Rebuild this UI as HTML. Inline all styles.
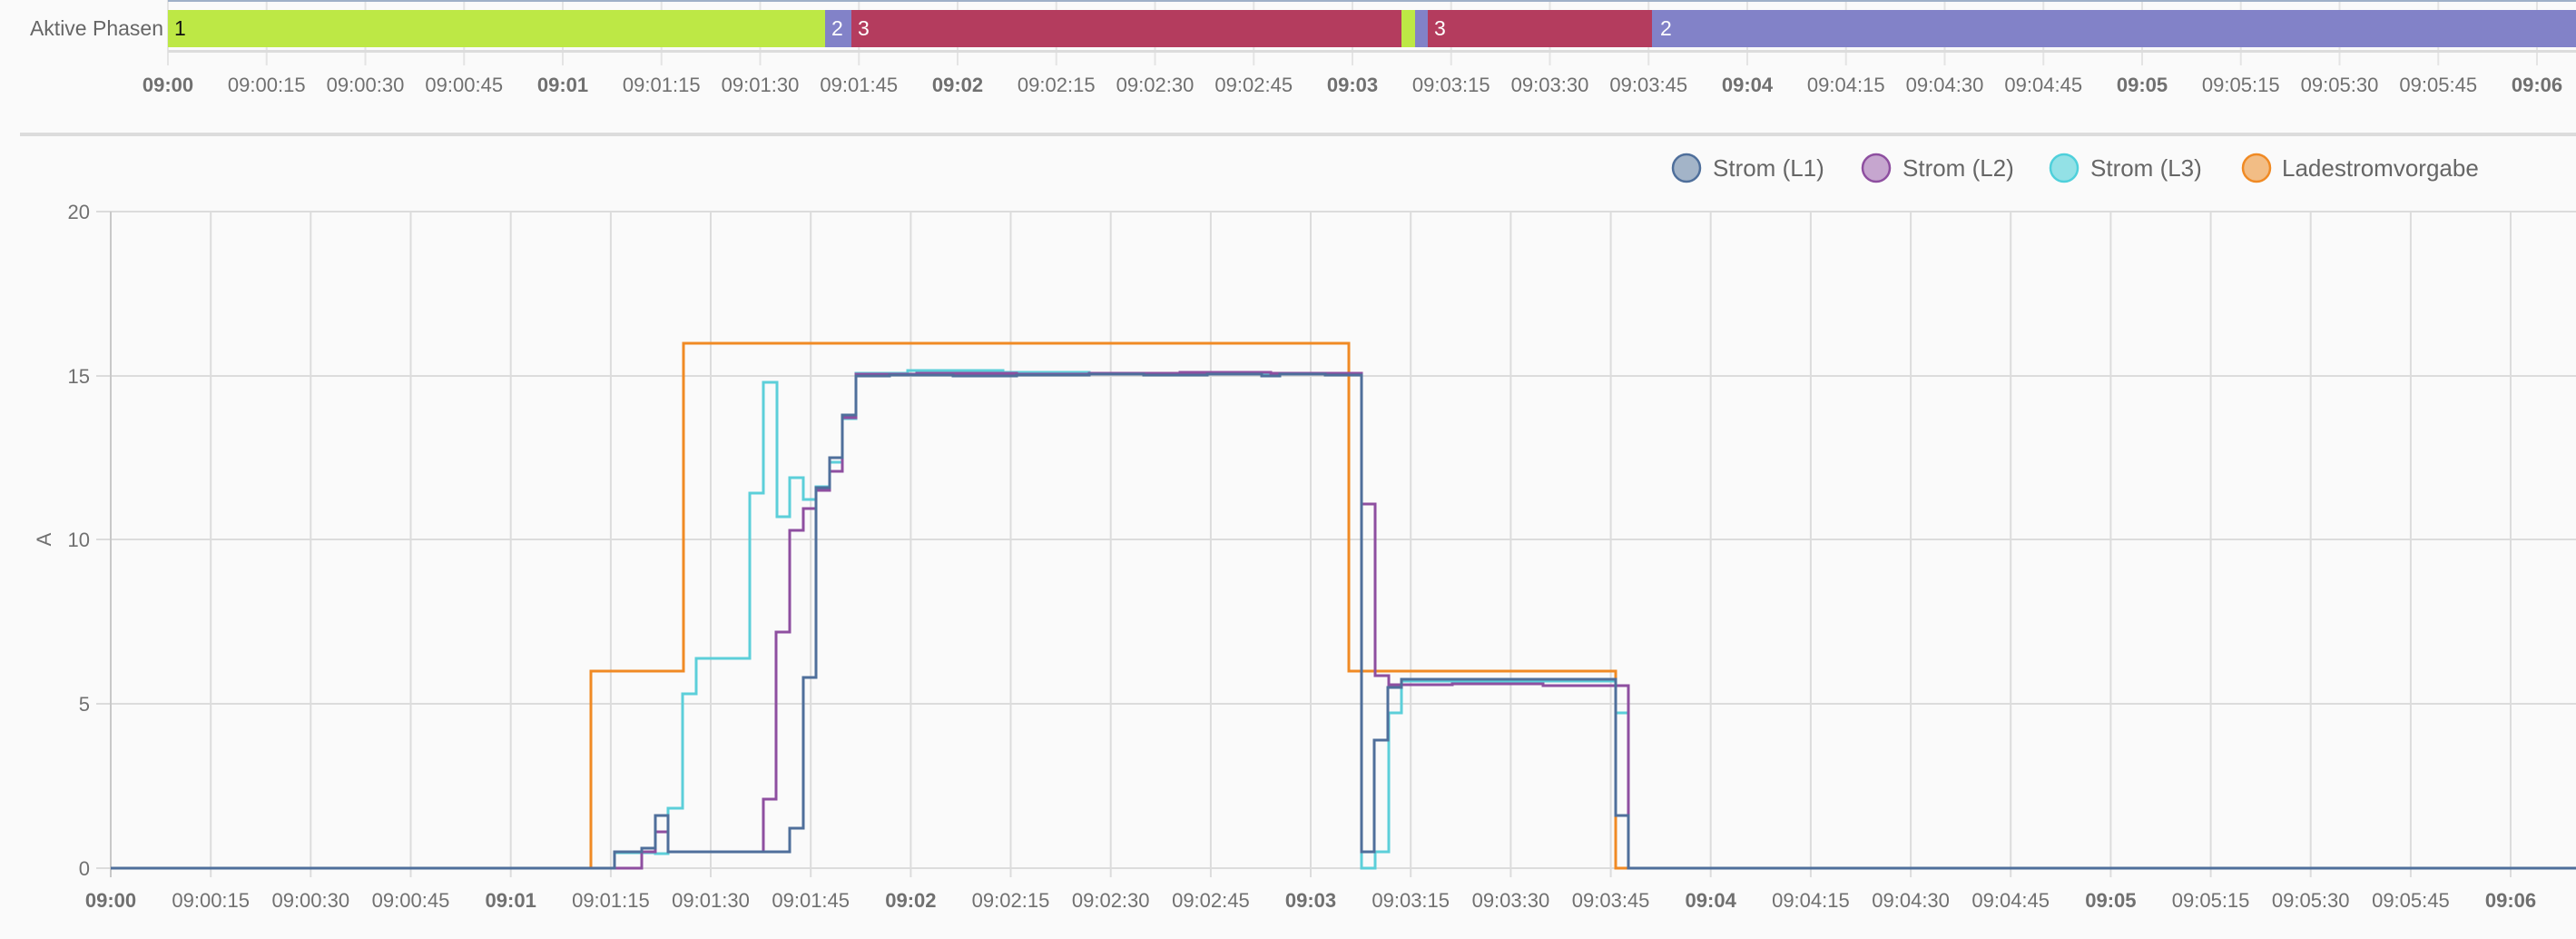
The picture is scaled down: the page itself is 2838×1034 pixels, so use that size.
<!DOCTYPE html>
<html><head><meta charset="utf-8"><style>
html,body{margin:0;padding:0;background:#fafafa;}
svg{display:block;font-family:"Liberation Sans",sans-serif;}
.t{fill:#707070;font-size:22px;text-anchor:middle;}
.b{font-weight:bold;}
</style></head><body>
<svg width="2838" height="1034" viewBox="0 0 2838 1034" xmlns="http://www.w3.org/2000/svg">
<rect width="2838" height="1034" fill="#fafafa"/>
<!-- top timeline -->
<g stroke="#e4e4e4" stroke-width="2">
<line x1="185" y1="0" x2="185" y2="72"/><line x1="293.75" y1="0" x2="293.75" y2="72"/><line x1="402.5" y1="0" x2="402.5" y2="72"/><line x1="511.25" y1="0" x2="511.25" y2="72"/><line x1="620" y1="0" x2="620" y2="72"/><line x1="728.75" y1="0" x2="728.75" y2="72"/><line x1="837.5" y1="0" x2="837.5" y2="72"/><line x1="946.25" y1="0" x2="946.25" y2="72"/><line x1="1055" y1="0" x2="1055" y2="72"/><line x1="1163.75" y1="0" x2="1163.75" y2="72"/><line x1="1272.5" y1="0" x2="1272.5" y2="72"/><line x1="1381.25" y1="0" x2="1381.25" y2="72"/><line x1="1490" y1="0" x2="1490" y2="72"/><line x1="1598.75" y1="0" x2="1598.75" y2="72"/><line x1="1707.5" y1="0" x2="1707.5" y2="72"/><line x1="1816.25" y1="0" x2="1816.25" y2="72"/><line x1="1925" y1="0" x2="1925" y2="72"/><line x1="2033.75" y1="0" x2="2033.75" y2="72"/><line x1="2142.5" y1="0" x2="2142.5" y2="72"/><line x1="2251.25" y1="0" x2="2251.25" y2="72"/><line x1="2360" y1="0" x2="2360" y2="72"/><line x1="2468.75" y1="0" x2="2468.75" y2="72"/><line x1="2577.5" y1="0" x2="2577.5" y2="72"/><line x1="2686.25" y1="0" x2="2686.25" y2="72"/><line x1="2795" y1="0" x2="2795" y2="72"/>
</g>
<rect x="185" y="0" width="2653" height="2" fill="#9fb0c8"/>
<rect x="185" y="11" width="724" height="41" fill="#bde845"/>
<rect x="909" y="11" width="29" height="41" fill="#8282c8"/>
<rect x="938" y="11" width="606" height="41" fill="#b43c5e"/>
<rect x="1544" y="11" width="15" height="41" fill="#bde845"/>
<rect x="1559" y="11" width="14" height="41" fill="#8282c8"/>
<rect x="1573" y="11" width="247" height="41" fill="#b43c5e"/>
<rect x="1820" y="11" width="1018" height="41" fill="#8282c8"/>
<text x="192" y="39" font-size="23" fill="#111">1</text>
<text x="916" y="39" font-size="23" fill="#fff">2</text>
<text x="945" y="39" font-size="23" fill="#fff">3</text>
<text x="1580" y="39" font-size="23" fill="#fff">3</text>
<text x="1829" y="39" font-size="23" fill="#fff">2</text>
<text x="180" y="39" font-size="23" fill="#666" text-anchor="end">Aktive Phasen</text>
<rect x="185" y="55" width="2653" height="3" fill="#dcdcdc"/>
<g class="t">
<text x="185" y="101" class="b">09:00</text><text x="293.75" y="101">09:00:15</text><text x="402.5" y="101">09:00:30</text><text x="511.25" y="101">09:00:45</text><text x="620" y="101" class="b">09:01</text><text x="728.75" y="101">09:01:15</text><text x="837.5" y="101">09:01:30</text><text x="946.25" y="101">09:01:45</text><text x="1055" y="101" class="b">09:02</text><text x="1163.75" y="101">09:02:15</text><text x="1272.5" y="101">09:02:30</text><text x="1381.25" y="101">09:02:45</text><text x="1490" y="101" class="b">09:03</text><text x="1598.75" y="101">09:03:15</text><text x="1707.5" y="101">09:03:30</text><text x="1816.25" y="101">09:03:45</text><text x="1925" y="101" class="b">09:04</text><text x="2033.75" y="101">09:04:15</text><text x="2142.5" y="101">09:04:30</text><text x="2251.25" y="101">09:04:45</text><text x="2360" y="101" class="b">09:05</text><text x="2468.75" y="101">09:05:15</text><text x="2577.5" y="101">09:05:30</text><text x="2686.25" y="101">09:05:45</text><text x="2795" y="101" class="b">09:06</text>
</g>
<rect x="22" y="146" width="2816" height="4" fill="#dcdcdc"/>
<!-- legend -->
<circle cx="1858" cy="185" r="15" fill="#a3b4c8" stroke="#4f6f9b" stroke-width="2.5"/>
<text x="1887" y="194" font-size="26" fill="#666">Strom (L1)</text>
<circle cx="2067" cy="185" r="15" fill="#c6a6cf" stroke="#8e4fa0" stroke-width="2.5"/>
<text x="2096" y="194" font-size="26" fill="#666">Strom (L2)</text>
<circle cx="2274" cy="185" r="15" fill="#93e1e6" stroke="#4fd0db" stroke-width="2.5"/>
<text x="2303" y="194" font-size="26" fill="#666">Strom (L3)</text>
<circle cx="2486" cy="185" r="15" fill="#f2bd85" stroke="#f08a24" stroke-width="2.5"/>
<text x="2514" y="194" font-size="26" fill="#666">Ladestromvorgabe</text>
<!-- chart grid -->
<g stroke="#dcdcdc" stroke-width="2">
<line x1="106" y1="233" x2="2838" y2="233"/><line x1="106" y1="414" x2="2838" y2="414"/><line x1="106" y1="594" x2="2838" y2="594"/><line x1="106" y1="775" x2="2838" y2="775"/><line x1="106" y1="956" x2="2838" y2="956"/>
<line x1="232.2" y1="233" x2="232.2" y2="966"/><line x1="342.3" y1="233" x2="342.3" y2="966"/><line x1="452.5" y1="233" x2="452.5" y2="966"/><line x1="562.7" y1="233" x2="562.7" y2="966"/><line x1="672.9" y1="233" x2="672.9" y2="966"/><line x1="783" y1="233" x2="783" y2="966"/><line x1="893.2" y1="233" x2="893.2" y2="966"/><line x1="1003.4" y1="233" x2="1003.4" y2="966"/><line x1="1113.5" y1="233" x2="1113.5" y2="966"/><line x1="1223.7" y1="233" x2="1223.7" y2="966"/><line x1="1333.9" y1="233" x2="1333.9" y2="966"/><line x1="1444" y1="233" x2="1444" y2="966"/><line x1="1554.2" y1="233" x2="1554.2" y2="966"/><line x1="1664.4" y1="233" x2="1664.4" y2="966"/><line x1="1774.6" y1="233" x2="1774.6" y2="966"/><line x1="1884.7" y1="233" x2="1884.7" y2="966"/><line x1="1994.9" y1="233" x2="1994.9" y2="966"/><line x1="2105.1" y1="233" x2="2105.1" y2="966"/><line x1="2215.2" y1="233" x2="2215.2" y2="966"/><line x1="2325.4" y1="233" x2="2325.4" y2="966"/><line x1="2435.6" y1="233" x2="2435.6" y2="966"/><line x1="2545.7" y1="233" x2="2545.7" y2="966"/><line x1="2655.9" y1="233" x2="2655.9" y2="966"/><line x1="2766" y1="233" x2="2766" y2="966"/>
</g>
<line x1="122" y1="233" x2="122" y2="966" stroke="#c8c8c8" stroke-width="2"/>
<g class="t" style="text-anchor:end">
<text x="99" y="241">20</text><text x="99" y="422">15</text><text x="99" y="602">10</text><text x="99" y="783">5</text><text x="99" y="964">0</text>
</g>
<text x="0" y="0" font-size="22" fill="#707070" text-anchor="middle" transform="translate(56,594) rotate(-90)">A</text>
<g class="t">
<text x="122" y="999" class="b">09:00</text><text x="232.2" y="999">09:00:15</text><text x="342.3" y="999">09:00:30</text><text x="452.5" y="999">09:00:45</text><text x="562.7" y="999" class="b">09:01</text><text x="672.9" y="999">09:01:15</text><text x="783" y="999">09:01:30</text><text x="893.2" y="999">09:01:45</text><text x="1003.4" y="999" class="b">09:02</text><text x="1113.5" y="999">09:02:15</text><text x="1223.7" y="999">09:02:30</text><text x="1333.9" y="999">09:02:45</text><text x="1444" y="999" class="b">09:03</text><text x="1554.2" y="999">09:03:15</text><text x="1664.4" y="999">09:03:30</text><text x="1774.6" y="999">09:03:45</text><text x="1884.7" y="999" class="b">09:04</text><text x="1994.9" y="999">09:04:15</text><text x="2105.1" y="999">09:04:30</text><text x="2215.2" y="999">09:04:45</text><text x="2325.4" y="999" class="b">09:05</text><text x="2435.6" y="999">09:05:15</text><text x="2545.7" y="999">09:05:30</text><text x="2655.9" y="999">09:05:45</text><text x="2766" y="999" class="b">09:06</text>
</g>
<!-- series -->
<g fill="none" stroke-width="3" stroke-linejoin="miter">
<path stroke="#f08a24" d="M122,956 H651 V739 H753 V378 H1486 V739 H1780 V956 H2838"/>
<path stroke="#5ccfd9" d="M122,956 H677 V939 H722 V940 H736 V890 H752 V764 H767 V725 H826 V543 H841 V421 H856 V569 H870 V526 H885 V550 H899 V536 H914 V509 H928 V461 H943 V411 H1000 V408 H1105 V410 H1200 V412 H1350 V411 H1500 V956 H1515 V938 H1530 V785 H1544 V750 H1780 V785 H1794 V956 H2838"/>
<path stroke="#8e4fa0" d="M122,956 H707 V938 H722 V916 H736 V938 H841 V880 H855 V696 H870 V584 H885 V560 H899 V540 H914 V519 H928 V460 H943 V412 H1010 V411 H1120 V412 H1200 V411 H1300 V410 H1400 V411 H1500 V555 H1515 V744 H1530 V754 H1600 V753 H1700 V755 H1794 V956 H2838"/>
<path stroke="#4f6f9b" d="M122,956 H677 V938 H707 V934 H722 V898 H736 V938 H870 V912 H885 V746 H899 V537 H914 V504 H928 V457 H943 V414 H980 V413 H1050 V414 H1120 V413 H1200 V412 H1260 V413 H1330 V412 H1390 V414 H1410 V412 H1460 V413 H1500 V938 H1514 V815 H1529 V757 H1544 V748 H1780 V898 H1794 V956 H2838"/>
</g>
</svg>
</body></html>
